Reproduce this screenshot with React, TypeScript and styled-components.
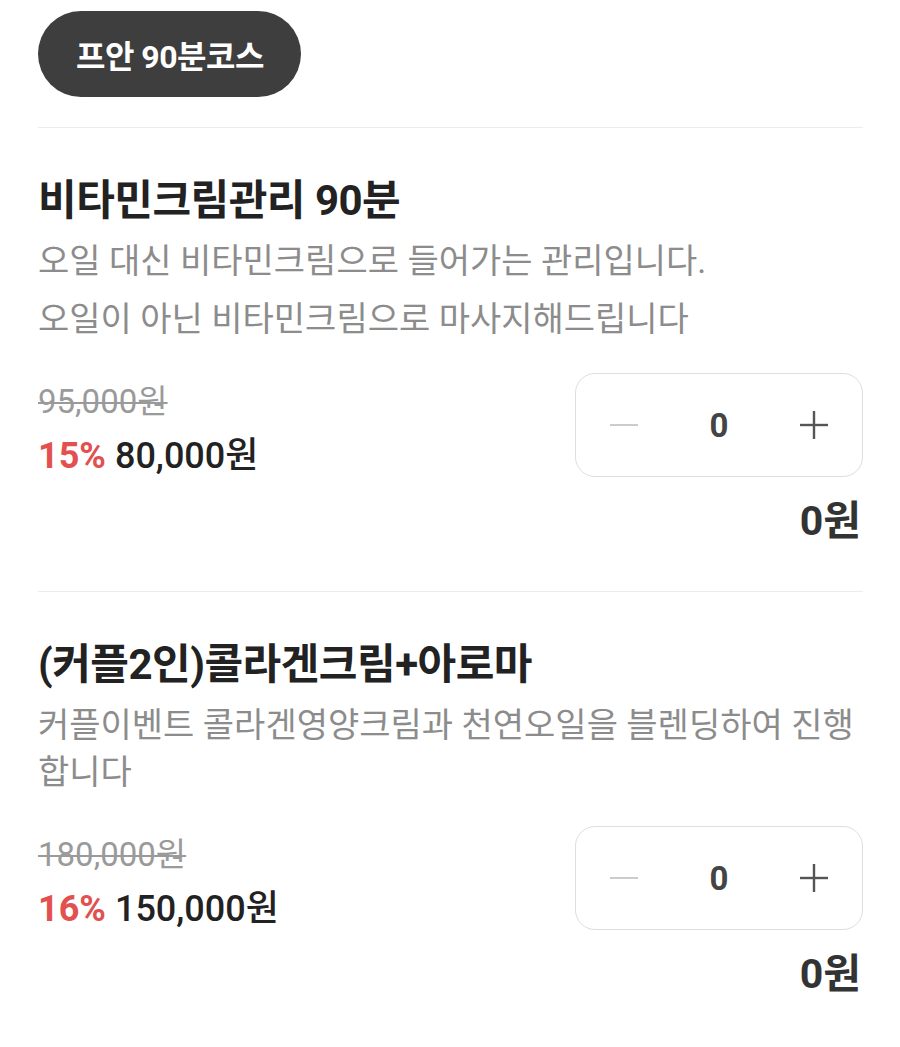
import React from "react";
import styled, { createGlobalStyle } from "styled-components";

const GlobalStyle = createGlobalStyle`
  html, body {
    margin: 0;
    padding: 0;
    background: #ffffff;
  }
  body {
    font-family: Roboto, "Noto Sans CJK KR", sans-serif;
    color: #222222;
  }
`;

const Page = styled.div`
  padding: 11px 37px 0 38px;
  width: 900px;
  box-sizing: border-box;
`;

const CourseTag = styled.div`
  display: inline-flex;
  align-items: center;
  height: 86px;
  padding: 0 37px 0 38px;
  border-radius: 43px;
  background: #3e3e3e;
  color: #ffffff;
  font-size: 32px;
  font-weight: 700;
  letter-spacing: -0.5px;
`;

const Divider = styled.hr<{ $first?: boolean }>`
  margin: ${(p) => (p.$first ? "30px" : "0")} 0 0;
  border: 0;
  border-top: 1.5px solid #ececec;
`;

const Item = styled.section`
  padding: 48px 0 48px;
`;

const Title = styled.h2`
  margin: 0 0 12px;
  font-size: 42px;
  line-height: 50px;
  font-weight: 700;
  color: #222222;
  letter-spacing: -0.5px;
`;

const Desc = styled.p<{ $gap?: number }>`
  margin: 0;
  margin-top: ${(p) => p.$gap ?? 0}px;
  font-size: 34px;
  line-height: 47px;
  color: #8c8c8c;
  font-weight: 400;
`;

const PriceRow = styled.div`
  display: flex;
  justify-content: space-between;
  align-items: flex-start;
  margin-top: 30px;
`;

const PriceCol = styled.div`
  display: flex;
  flex-direction: column;
  padding-top: 9px;
  gap: 12px;
`;

const OldPrice = styled.del`
  font-size: 33px;
  line-height: 40px;
  color: #9a9a9a;
  text-decoration-thickness: 2px;
`;

const SalePrice = styled.div`
  font-size: 36px;
  line-height: 44px;
  font-weight: 500;
  color: #222222;
  display: flex;
  gap: 9px;
`;

const Rate = styled.span`
  color: #e2504f;
  font-weight: 700;
`;

const RightCol = styled.div`
  display: flex;
  flex-direction: column;
  align-items: flex-end;
`;

const Stepper = styled.div`
  display: grid;
  grid-template-columns: repeat(3, 1fr);
  align-items: center;
  width: 288px;
  height: 104px;
  box-sizing: border-box;
  border: 1.5px solid #dedede;
  border-radius: 20px;
`;

const StepButton = styled.button`
  display: flex;
  align-items: center;
  justify-content: center;
  height: 100%;
  padding: 0;
  border: 0;
  background: none;
  cursor: pointer;
`;

const Count = styled.span`
  text-align: center;
  font-size: 33px;
  font-weight: 700;
  color: #444444;
`;

const Total = styled.div`
  margin-top: 22px;
  font-size: 41px;
  line-height: 44px;
  font-weight: 700;
  color: #333333;
  margin-right: 2px;
`;

const MinusIcon = () => (
  <svg width="30" height="30" viewBox="0 0 30 30">
    <line x1="1" y1="15" x2="29" y2="15" stroke="#cccccc" strokeWidth="2" />
  </svg>
);

const PlusIcon = () => (
  <svg width="30" height="30" viewBox="0 0 30 30">
    <line x1="1" y1="15" x2="29" y2="15" stroke="#555555" strokeWidth="2.4" />
    <line x1="15" y1="1" x2="15" y2="29" stroke="#555555" strokeWidth="2.4" />
  </svg>
);

interface Product {
  title: string;
  desc: string[];
  oldPrice: string;
  rate: string;
  price: string;
}

const products: Product[] = [
  {
    title: "비타민크림관리 90분",
    desc: [
      "오일 대신 비타민크림으로 들어가는 관리입니다.",
      "오일이 아닌 비타민크림으로 마사지해드립니다",
    ],
    oldPrice: "95,000원",
    rate: "15%",
    price: "80,000원",
  },
  {
    title: "(커플2인)콜라겐크림+아로마",
    desc: ["커플이벤트 콜라겐영양크림과 천연오일을 블렌딩하여 진행 합니다"],
    oldPrice: "180,000원",
    rate: "16%",
    price: "150,000원",
  },
];

const ProductItem: React.FC<{ item: Product }> = ({ item }) => (
  <Item>
    <Title>{item.title}</Title>
    {item.desc.map((d, i) => (
      <Desc key={i} $gap={i > 0 ? 11 : 0}>
        {d}
      </Desc>
    ))}
    <PriceRow>
      <PriceCol>
        <OldPrice>{item.oldPrice}</OldPrice>
        <SalePrice>
          <Rate>{item.rate}</Rate>
          <span>{item.price}</span>
        </SalePrice>
      </PriceCol>
      <RightCol>
        <Stepper>
          <StepButton aria-label="minus">
            <MinusIcon />
          </StepButton>
          <Count>0</Count>
          <StepButton aria-label="plus">
            <PlusIcon />
          </StepButton>
        </Stepper>
        <Total>0원</Total>
      </RightCol>
    </PriceRow>
  </Item>
);

export default function App() {
  return (
    <>
      <GlobalStyle />
      <Page>
        <CourseTag>프안 90분코스</CourseTag>
        <Divider $first />
        {products.map((p, i) => (
          <React.Fragment key={i}>
            {i > 0 && <Divider />}
            <ProductItem item={p} />
          </React.Fragment>
        ))}
      </Page>
    </>
  );
}
